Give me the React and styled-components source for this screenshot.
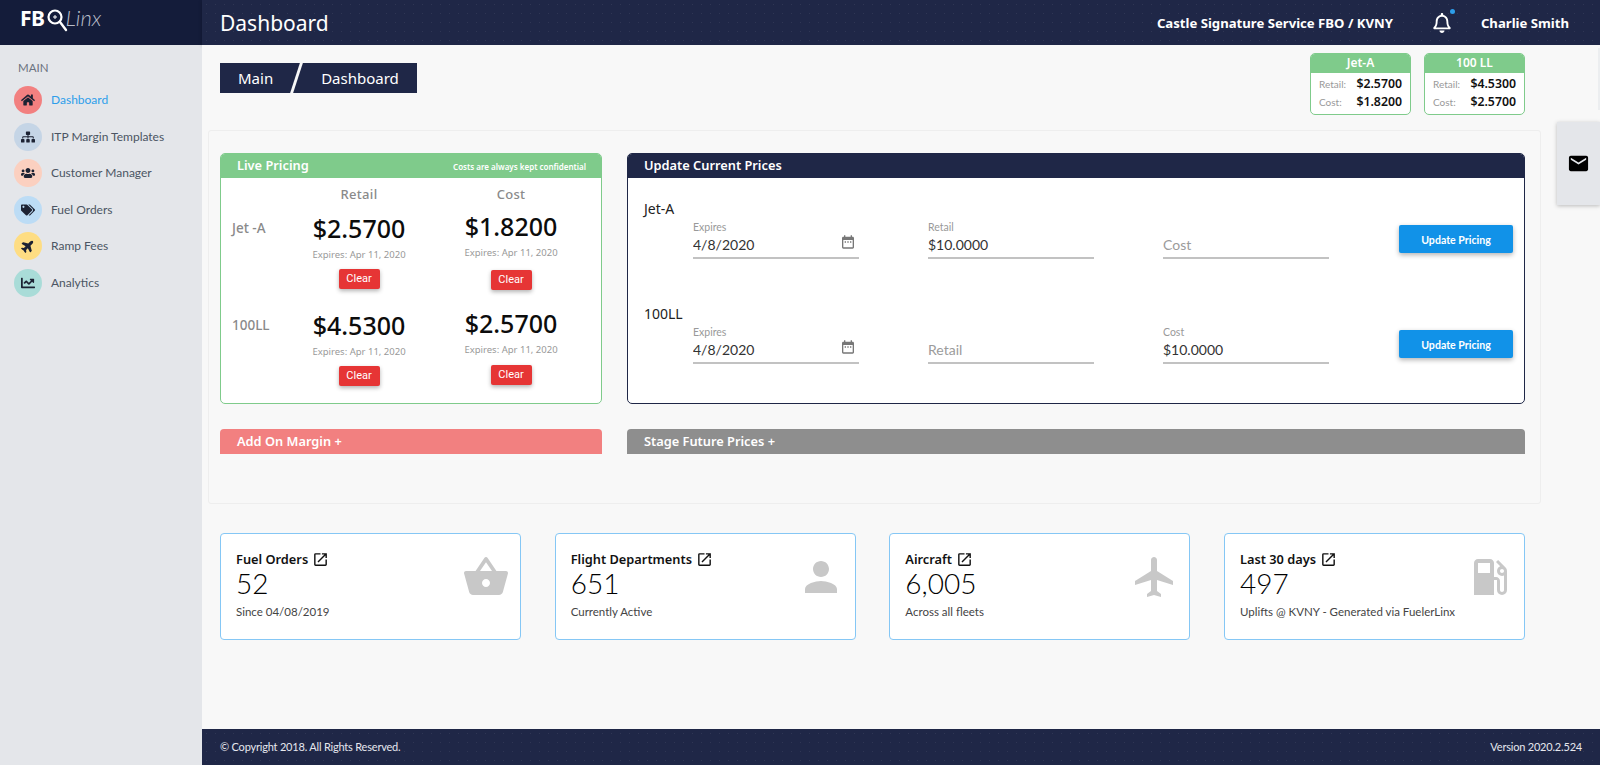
import React from 'react'
import styled, { createGlobalStyle } from 'styled-components'
import { FaHome, FaSitemap, FaUsers, FaTags, FaPlane, FaChartLine, FaRegBell } from 'react-icons/fa'
import { MdEmail, MdDateRange, MdOpenInNew, MdShoppingBasket, MdPerson, MdFlight, MdLocalGasStation } from 'react-icons/md'

const HEAD = `"Noto Sans", "Open Sans", sans-serif`
const BODY = `Lato, "Liberation Sans", sans-serif`
const NAVY = '#1f2747'
const GREEN = '#7fcb8b'
const DOTS = `radial-gradient(rgba(255,255,255,0.07) 0.6px, transparent 0.8px)`

const Global = createGlobalStyle`
  html, body { margin: 0; padding: 0; background: #f8f8f8; }
  body { font-family: ${BODY}; overflow: hidden; }
  * { box-sizing: border-box; }
`

const Shell = styled.div`
  display: grid;
  grid-template-columns: 202px 1fr;
  height: 765px;
  position: relative;
  overflow: hidden;
`

const Sidebar = styled.aside`
  background: #e4e6ea;
  display: flex;
  flex-direction: column;
`
const LogoBar = styled.div`
  height: 45px;
  background: #141c3a;
  padding: 4px 0 0 20px;
  display: flex;
  align-items: flex-start;
  color: #fff;
`
const LogoBold = styled.span`
  font: 700 21px/28px ${HEAD};
  letter-spacing: -0.5px;
`
const LogoThin = styled.span`
  font: italic 300 22px/28px ${BODY};
  color: #b9bdc9;
  margin-left: -3px;
`
const MenuTitle = styled.div`
  font: 400 11.5px/16px ${BODY};
  color: #6b7280;
  margin: 15px 0 0 18px;
`
const Menu = styled.nav`
  margin-top: 10px;
  display: flex;
  flex-direction: column;
  gap: 8.6px;
  padding-left: 14px;
`
const MenuItem = styled.div`
  display: flex;
  align-items: center;
  gap: 9px;
  height: 28px;
  font: 400 12px/16px ${BODY};
  color: ${p => (p.$active ? '#2d9eea' : '#4b5563')};
`
const Circle = styled.span`
  width: 28px;
  height: 28px;
  border-radius: 50%;
  background: ${p => p.$bg};
  color: #1c2233;
  display: flex;
  align-items: center;
  justify-content: center;
  font-size: 14px;
  svg { transform: rotate(${p => p.$turn || 0}deg); }
`

const Main = styled.div`
  display: flex;
  flex-direction: column;
  min-width: 0;
`
const Topbar = styled.header`
  height: 45px;
  background-color: ${NAVY};
  background-image: ${DOTS};
  background-size: 9px 9px;
  box-shadow: 0 1px 4px rgba(0, 0, 0, 0.2);
  display: flex;
  align-items: center;
  padding-left: 18px;
  color: #fff;
`
const PageTitle = styled.div`
  font: 400 21px/30px ${HEAD};
  padding-top: 1px;
  flex: 1;
`
const TopText = styled.div`
  font: 700 13.15px/18px ${HEAD};
`
const Bell = styled.div`
  position: relative;
  margin: 0 29px 0 39px;
  display: flex;
  font-size: 20px;
`
const BellDot = styled.span`
  position: absolute;
  right: -3px;
  top: -4px;
  width: 5px;
  height: 5px;
  border-radius: 50%;
  background: #2d9eea;
`
const UserName = styled(TopText)`
  margin-right: 31px;
`

const Content = styled.main`
  flex: 1;
  background: #f8f8f8;
`
const HeadRow = styled.div`
  height: 85px;
  padding: 8px 75px 0 18px;
  display: flex;
  justify-content: space-between;
  align-items: flex-start;
`
const Breadcrumb = styled.div`
  margin-top: 10px;
  display: flex;
  height: 30px;
  background-color: ${NAVY};
  color: #fff;
  font: 400 15px/30px ${HEAD};
`
const Crumb = styled.span`
  padding: ${p => (p.$first ? '0 22px 0 18px' : '0 18px 0 23px')};
`
const CrumbSlash = styled.span`
  width: 3px;
  background: #f8f8f8;
  transform: skewX(-18deg);
`
const MiniCards = styled.div`
  display: flex;
  gap: 13px;
`
const MiniCard = styled.div`
  width: 101px;
  height: 62px;
  border: 1px solid ${GREEN};
  border-radius: 5px;
  background: #fff;
  overflow: hidden;
`
const MiniHead = styled.div`
  margin: -1px -1px 0;
  height: 20px;
  background: ${GREEN};
  color: #fff;
  text-align: center;
  font: 600 12px/20px ${HEAD};
`
const MiniRow = styled.div`
  display: flex;
  justify-content: space-between;
  align-items: center;
  padding: 0 8px;
  height: 18px;
  margin-top: ${p => (p.$first ? '2px' : '0')};
`
const MiniLabel = styled.span`
  font: 400 10px/14px ${BODY};
  color: #999;
`
const MiniValue = styled.span`
  font: 600 12.3px/14px ${HEAD};
  color: #111;
`

const Panel = styled.section`
  margin-left: 6px;
  width: 1333px;
  height: 374px;
  border: 1px solid #eeeeee;
  border-radius: 3px;
  padding: 22px 15px 0 11px;
  display: grid;
  grid-template-columns: 382px 898px;
  grid-template-rows: 251px 25px;
  column-gap: 25px;
  row-gap: 25px;
`
const Card = styled.div`
  background: #fff;
  border: 1px solid ${p => p.$color};
  border-radius: 5px;
  overflow: hidden;
`
const CardHead = styled.div`
  margin: -1px -1px 0;
  height: 25px;
  padding: 0 16px 0 17px;
  background-color: ${p => p.$color};
  display: flex;
  align-items: center;
  justify-content: space-between;
  color: #fff;
  font: 600 12.8px/25px ${HEAD};
  border-radius: 5px 5px 0 0;
`
const CardNote = styled.span`
  font: 600 8px/25px ${HEAD};
  margin-top: 2px;
`
const PriceGrid = styled.div`
  display: grid;
  grid-template-columns: 51px 152px 152px;
  padding: 7px 0 0 11px;
`
const ColHead = styled.div`
  text-align: center;
  font: 500 13px/18px ${HEAD};
  color: #8a8a8a;
  letter-spacing: 0.3px;
`
const FuelLabel = styled.div`
  font: 500 13.5px/18px ${HEAD};
  color: #8a8a8a;
  padding-top: ${p => p.$top}px;
`
const PriceCell = styled.div`
  height: 97px;
  display: flex;
  flex-direction: column;
  align-items: center;
  padding-top: ${p => (p.$up ? 6 : 8)}px;
`
const Price = styled.div`
  font: 500 25px/34px ${HEAD};
  color: #0c0c0c;
`
const Expires = styled.div`
  font: 400 9.5px/14px ${HEAD};
  color: #999;
  margin-top: 3px;
`
const ClearBtn = styled.button`
  margin-top: ${p => p.$gap}px;
  width: 41px;
  height: 20px;
  padding: 0;
  border: 0;
  border-radius: 2px;
  background: #e63535;
  color: #fff;
  font: 400 11px/20px "Roboto", sans-serif;
  box-shadow: 0 2px 4px rgba(0, 0, 0, 0.3);
`
const FormRow = styled.div`
  height: 105px;
  padding: 22px 12px 0 16px;
  position: relative;
`
const RowTitle = styled.div`
  font: 400 14px/18px ${HEAD};
  color: #222;
`
const Fields = styled.div`
  display: flex;
  margin: 3px 0 0 49px;
  align-items: flex-end;
`
const Field = styled.label`
  display: block;
  width: 166px;
  margin-right: 69px;
  height: 38px;
  border-bottom: 2px solid #c2c2c2;
  position: relative;
`
const FieldLabel = styled.div`
  font: 400 10.5px/13px ${BODY};
  color: #999;
`
const FieldInput = styled.input`
  display: block;
  width: 100%;
  height: 22px;
  border: 0;
  outline: 0;
  padding: 0;
  background: transparent;
  font: 400 14px/22px ${BODY};
  color: #333;
  margin-top: ${p => (p.$bare ? '13px' : '0')};
  &::placeholder { color: #9b9b9b; opacity: 1; }
`
const CalIcon = styled.span`
  position: absolute;
  right: 3px;
  top: 13px;
  color: #777;
  font-size: 16px;
  display: flex;
`
const UpdateBtn = styled.button`
  position: absolute;
  right: 11px;
  top: 47px;
  width: 114px;
  height: 28px;
  border: 0;
  border-radius: 2px;
  background: #1192e8;
  color: #fff;
  font: 700 10.6px/28px ${BODY};
  box-shadow: 0 2px 5px rgba(0, 0, 0, 0.3);
`
const Fold = styled.div`
  height: 25px;
  padding-left: 17px;
  background: ${p => p.$color};
  color: #fff;
  border-radius: 4px 4px 0 0;
  font: 600 12.8px/25px ${HEAD};
`

const Stats = styled.div`
  margin: 29px 0 0 18px;
  width: 1305px;
  display: grid;
  grid-template-columns: repeat(4, 1fr);
  column-gap: 33.67px;
`
const StatCard = styled.div`
  height: 107px;
  background: #fff;
  border: 1px solid #85c7f5;
  border-radius: 4px;
  padding: 16px 15px 0;
  display: flex;
  justify-content: space-between;
`
const StatTitle = styled.div`
  font: 600 12.8px/18px ${HEAD};
  color: #111;
  display: flex;
  align-items: center;
  gap: 4px;
`
const StatValue = styled.div`
  font: 300 28px/30px ${BODY};
  color: #000;
  margin-top: 0;
`
const StatSub = styled.div`
  font: 400 11.5px/16px ${BODY};
  color: #444;
  margin-top: 6px;
`
const StatIcon = styled.div`
  color: #c8c8c8;
  font-size: 48px;
  display: flex;
  margin: 3px -5px 0 0;
`

const Footer = styled.footer`
  height: 36px;
  background-color: ${NAVY};
  background-image: ${DOTS};
  background-size: 9px 9px;
  color: #e6e8ee;
  display: flex;
  justify-content: space-between;
  align-items: center;
  padding: 0 18px;
  font: 400 11px/16px ${BODY};
  letter-spacing: -0.2px;
`
const MailTab = styled.div`
  position: absolute;
  right: 0;
  top: 122px;
  width: 43px;
  height: 83px;
  background: #e4e6ea;
  box-shadow: 0 1px 4px rgba(0, 0, 0, 0.25);
  display: flex;
  align-items: center;
  justify-content: center;
  font-size: 23px;
  color: #000;
`
const EdgeTab = styled.div`
  position: absolute;
  right: 0;
  top: 48px;
  width: 2px;
  height: 62px;
  background: #eceef0;
`

const menu = [
  { label: 'Dashboard', icon: <FaHome />, bg: '#f28080', active: true },
  { label: 'ITP Margin Templates', icon: <FaSitemap />, bg: '#c5d5e6' },
  { label: 'Customer Manager', icon: <FaUsers />, bg: '#fbd0c0' },
  { label: 'Fuel Orders', icon: <FaTags />, bg: '#bcdcf5' },
  { label: 'Ramp Fees', icon: <FaPlane />, bg: '#fedd83', turn: -45 },
  { label: 'Analytics', icon: <FaChartLine />, bg: '#a9dcd8' },
]

const stats = [
  { title: 'Fuel Orders', value: '52', sub: 'Since 04/08/2019', icon: <MdShoppingBasket /> },
  { title: 'Flight Departments', value: '651', sub: 'Currently Active', icon: <MdPerson /> },
  { title: 'Aircraft', value: '6,005', sub: 'Across all fleets', icon: <MdFlight /> },
  { title: 'Last 30 days', value: '497', sub: 'Uplifts @ KVNY - Generated via FuelerLinx', icon: <MdLocalGasStation /> },
]

function Mini({ name, retail, cost }) {
  return (
    <MiniCard>
      <MiniHead>{name}</MiniHead>
      <MiniRow $first><MiniLabel>Retail:</MiniLabel><MiniValue>{retail}</MiniValue></MiniRow>
      <MiniRow><MiniLabel>Cost:</MiniLabel><MiniValue>{cost}</MiniValue></MiniRow>
    </MiniCard>
  )
}

function PriceBox({ value, up, gap }) {
  return (
    <PriceCell $up={up}>
      <Price>{value}</Price>
      <Expires>Expires: Apr 11, 2020</Expires>
      <ClearBtn $gap={gap}>Clear</ClearBtn>
    </PriceCell>
  )
}

function PriceField({ label, value }) {
  return (
    <Field>
      {value && <FieldLabel>{label}</FieldLabel>}
      <FieldInput $bare={!value} readOnly value={value || ''} placeholder={label} />
    </Field>
  )
}

function FuelForm({ name, retail, cost }) {
  return (
    <FormRow>
      <RowTitle>{name}</RowTitle>
      <Fields>
        <Field>
          <FieldLabel>Expires</FieldLabel>
          <FieldInput readOnly value="4/8/2020" />
          <CalIcon><MdDateRange /></CalIcon>
        </Field>
        <PriceField label="Retail" value={retail} />
        <PriceField label="Cost" value={cost} />
      </Fields>
      <UpdateBtn>Update Pricing</UpdateBtn>
    </FormRow>
  )
}

export default function App() {
  return (
    <Shell>
      <Global />
      <Sidebar>
        <LogoBar>
          <LogoBold>FB</LogoBold>
          <svg width="24" height="32" viewBox="0 0 24 32" fill="none" stroke="#fff">
            <circle cx="10" cy="13" r="6.5" strokeWidth="2.2" />
            <path d="M15 18l6 8" strokeWidth="2.4" strokeLinecap="round" />
            <path d="M10 11v4M8 13h4" strokeWidth="1" />
          </svg>
          <LogoThin>Linx</LogoThin>
        </LogoBar>
        <MenuTitle>MAIN</MenuTitle>
        <Menu>
          {menu.map(m => (
            <MenuItem key={m.label} $active={m.active}>
              <Circle $bg={m.bg} $turn={m.turn}>{m.icon}</Circle>
              {m.label}
            </MenuItem>
          ))}
        </Menu>
      </Sidebar>
      <Main>
        <Topbar>
          <PageTitle>Dashboard</PageTitle>
          <TopText>Castle Signature Service FBO / KVNY</TopText>
          <Bell><FaRegBell /><BellDot /></Bell>
          <UserName>Charlie Smith</UserName>
        </Topbar>
        <Content>
          <HeadRow>
            <Breadcrumb>
              <Crumb $first>Main</Crumb>
              <CrumbSlash />
              <Crumb>Dashboard</Crumb>
            </Breadcrumb>
            <MiniCards>
              <Mini name="Jet-A" retail="$2.5700" cost="$1.8200" />
              <Mini name="100 LL" retail="$4.5300" cost="$2.5700" />
            </MiniCards>
          </HeadRow>
          <Panel>
            <Card $color={GREEN}>
              <CardHead $color={GREEN}>
                Live Pricing
                <CardNote>Costs are always kept confidential</CardNote>
              </CardHead>
              <PriceGrid>
                <div />
                <ColHead>Retail</ColHead>
                <ColHead>Cost</ColHead>
                <FuelLabel $top={16}>Jet -A</FuelLabel>
                <PriceBox value="$2.5700" gap={7} />
                <PriceBox value="$1.8200" up gap={10} />
                <FuelLabel $top={16}>100LL</FuelLabel>
                <PriceBox value="$4.5300" gap={7} />
                <PriceBox value="$2.5700" up gap={8} />
              </PriceGrid>
            </Card>
            <Card $color={NAVY}>
              <CardHead $color={NAVY}>Update Current Prices</CardHead>
              <FuelForm name="Jet-A" retail="$10.0000" />
              <FuelForm name="100LL" cost="$10.0000" />
            </Card>
            <Fold $color="#f28080">Add On Margin +</Fold>
            <Fold $color="#8e8e8e">Stage Future Prices +</Fold>
          </Panel>
          <Stats>
            {stats.map(s => (
              <StatCard key={s.title}>
                <div>
                  <StatTitle>{s.title} <MdOpenInNew size={17} /></StatTitle>
                  <StatValue>{s.value}</StatValue>
                  <StatSub>{s.sub}</StatSub>
                </div>
                <StatIcon>{s.icon}</StatIcon>
              </StatCard>
            ))}
          </Stats>
        </Content>
        <Footer>
          <span>© Copyright 2018. All Rights Reserved.</span>
          <span>Version 2020.2.524</span>
        </Footer>
      </Main>
      <EdgeTab />
      <MailTab><MdEmail /></MailTab>
    </Shell>
  )
}
